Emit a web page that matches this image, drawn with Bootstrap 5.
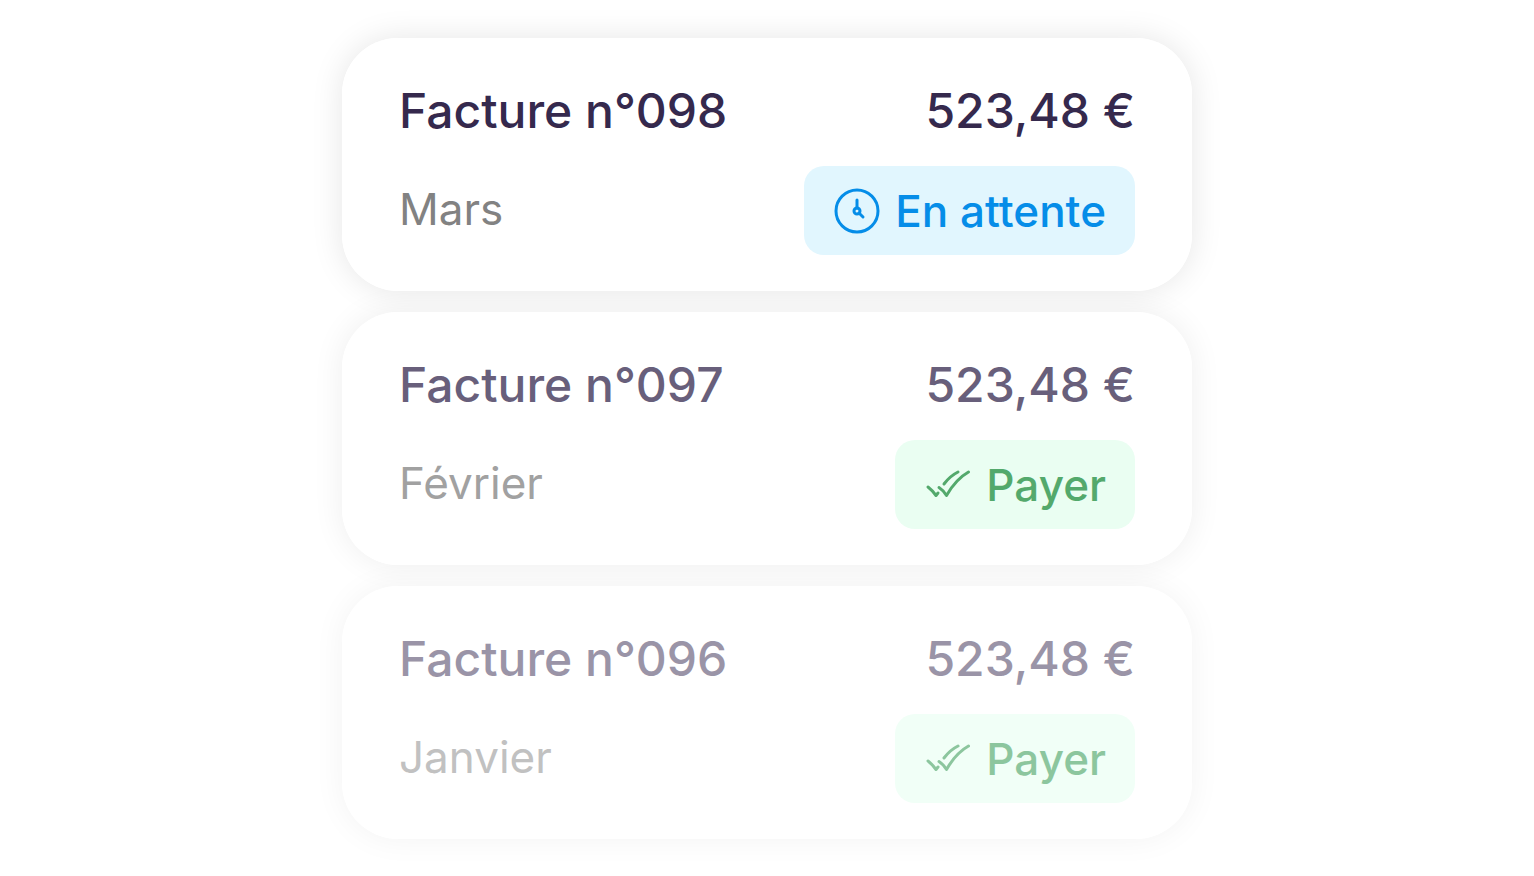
<!DOCTYPE html>
<html lang="fr">
<head>
<meta charset="utf-8">
<meta name="viewport" content="width=device-width, initial-scale=1">
<title>Factures</title>
<link href="https://cdn.jsdelivr.net/npm/bootstrap@5.3.0/dist/css/bootstrap.min.css" rel="stylesheet">
<style>
body { font-family: Inter, "Liberation Sans", sans-serif; background: #fff; }
.invoices { max-width: 850px; padding-top: 38px; padding-bottom: 37px; gap: 21px; position: relative; z-index: 0; }
.invoice { position: relative; border-radius: 56px; padding: 45px 57px 36px; gap: 27px; background: #fff; color: #35294d; }
/* shadows sit behind every card, so none falls on a neighbour */
.invoice::before { content: ""; position: absolute; inset: 0; z-index: -1; border-radius: inherit; box-shadow: 0 0 32px rgba(0,0,0,.1); }
.faded { color: #685f7b; }
.faded::before { box-shadow: 0 0 32px rgba(0,0,0,.07); }
.fainter { color: #9a94a7; }
.fainter::before { box-shadow: 0 0 32px rgba(0,0,0,.05); }
.heading, .amount { font-size: 48px; line-height: 56px; font-weight: 500; }
.month { font-size: 44px; line-height: 56px; padding-bottom: 4px; color: #828282; }
.faded .month { color: #a1a1a1; }
.fainter .month { color: #c1c1c1; }
.status { height: 89px; border: 0; border-radius: 20px; padding: 0 29px; gap: 14px; font-size: 44px; line-height: 56px; font-weight: 500; }
.waiting { background: #e1f6fe; color: #058de8; }
.pay { background: #eafef2; color: #53a96c; }
.fainter .pay { background: #f1fff7; color: #8cc69e; }
</style>
</head>
<body>
<main class="invoices container-fluid px-0 d-flex flex-column">
  <article class="invoice d-flex flex-column">
    <div class="d-flex justify-content-between"><h2 class="heading m-0">Facture n°098</h2><span class="amount">523,48 €</span></div>
    <div class="d-flex justify-content-between align-items-center">
      <span class="month">Mars</span>
      <span class="status waiting d-flex align-items-center">
        <svg width="48" height="48" viewBox="0 0 48 48" fill="none" stroke="currentColor" stroke-width="3" stroke-linecap="round" aria-hidden="true"><circle cx="24" cy="24" r="21"/><circle cx="24" cy="24" r="3"/><path d="M24 21v-8M26 26l4 4"/></svg>
        <span>En attente</span>
      </span>
    </div>
  </article>
  <article class="invoice faded d-flex flex-column">
    <div class="d-flex justify-content-between"><h2 class="heading m-0">Facture n°097</h2><span class="amount">523,48 €</span></div>
    <div class="d-flex justify-content-between align-items-center">
      <span class="month">Février</span>
      <button type="button" class="status pay d-flex align-items-center">
        <svg width="48" height="48" viewBox="0 0 48 48" fill="none" stroke="currentColor" stroke-width="3" stroke-linecap="round" stroke-linejoin="round" aria-hidden="true"><path d="M4 26Q8 29 12 34.500L14 32M15 26.500Q19 29 22.500 34.500Q32 18 44.500 11M20 23Q26 15 34 11"/></svg>
        <span>Payer</span>
      </button>
    </div>
  </article>
  <article class="invoice fainter d-flex flex-column">
    <div class="d-flex justify-content-between"><h2 class="heading m-0">Facture n°096</h2><span class="amount">523,48 €</span></div>
    <div class="d-flex justify-content-between align-items-center">
      <span class="month">Janvier</span>
      <button type="button" class="status pay d-flex align-items-center">
        <svg width="48" height="48" viewBox="0 0 48 48" fill="none" stroke="currentColor" stroke-width="3" stroke-linecap="round" stroke-linejoin="round" aria-hidden="true"><path d="M4 26Q8 29 12 34.500L14 32M15 26.500Q19 29 22.500 34.500Q32 18 44.500 11M20 23Q26 15 34 11"/></svg>
        <span>Payer</span>
      </button>
    </div>
  </article>
</main>
<script src="https://cdn.jsdelivr.net/npm/bootstrap@5.3.0/dist/js/bootstrap.bundle.min.js"></script>
</body>
</html>
